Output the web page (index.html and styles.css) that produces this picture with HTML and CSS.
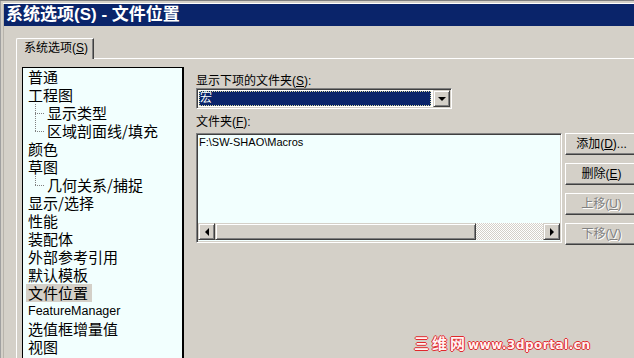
FILE: index.html
```html
<!DOCTYPE html>
<html lang="zh-CN">
<head>
<meta charset="utf-8">
<title>系统选项(S) - 文件位置</title>
<link rel="stylesheet" href="styles.css">
</head>
<body>
<div class="window">
  <div class="titlebar">系统选项(S) - 文件位置</div>
  <div class="dialog">
    <div class="tabs">
      <div class="tab">系统选项(<u>S</u>)</div>
    </div>
    <div class="panel">
      <div class="tree">
        <div class="item">普通</div>
        <div class="item">工程图</div>
        <div class="item child"><span class="conn"></span>显示类型</div>
        <div class="item child last"><span class="conn"></span>区域剖面线/填充</div>
        <div class="item">颜色</div>
        <div class="item">草图</div>
        <div class="item child last"><span class="conn"></span>几何关系/捕捉</div>
        <div class="item">显示/选择</div>
        <div class="item">性能</div>
        <div class="item">装配体</div>
        <div class="item">外部参考引用</div>
        <div class="item">默认模板</div>
        <div class="item selected"><span class="hl">文件位置</span></div>
        <div class="item latin">FeatureManager</div>
        <div class="item">选值框增量值</div>
        <div class="item">视图</div>
        <div class="item">备份/恢复</div>
      </div>
      <div class="right">
        <div class="label">显示下项的文件夹(<u>S</u>):</div>
        <div class="combo-row">
          <div class="combo">
            <div class="combo-sel">宏</div>
            <div class="drop"><span class="tri"></span></div>
          </div>
        </div>
        <div class="label label2">文件夹(<u>F</u>):</div>
        <div class="list-row">
          <div class="listbox">
            <div class="list-content">F:\SW-SHAO\Macros</div>
            <div class="hscroll">
              <div class="arrow"><span class="tri-left"></span></div>
              <div class="thumb"></div>
              <div class="track"></div>
              <div class="arrow"><span class="tri-right"></span></div>
            </div>
          </div>
          <div class="buttons">
            <div class="btn">添加(<u>D</u>)...</div>
            <div class="btn">删除(<u>E</u>)</div>
            <div class="btn disabled">上移(<u>U</u>)</div>
            <div class="btn disabled">下移(<u>V</u>)</div>
          </div>
        </div>
      </div>
    </div>
  </div>
  <div class="watermark"><span class="wm-cjk">三维网</span><span class="wm-lat">www.3dportal.cn</span></div>
</div>
</body>
</html>
```

FILE: styles.css
```css
html, body {
  margin: 0;
  padding: 0;
}

body {
  width: 634px;
  height: 358px;
  overflow: hidden;
  background: #d4d0c8;
  font-family: "Liberation Sans", "Noto Sans CJK SC", sans-serif;
  color: #000;
}

.window {
  position: relative;
  width: 634px;
  height: 358px;
  box-sizing: border-box;
  padding: 4px 0 0 4px;
  background: #d4d0c8;
  overflow: hidden;
  box-shadow: inset 0 1px #808080, inset 1px 0 #a0a0a0, inset 0 3px #d4d0c8, inset 3px 0 #d4d0c8, inset 0 4px #ffffff, inset 4px 0 #b8b4ac;
}

.titlebar {
  height: 22px;
  line-height: 22px;
  background: #0a246a;
  color: #fff;
  font-weight: bold;
  font-size: 17px;
  padding-left: 2px;
  white-space: nowrap;
}

.dialog {
  padding: 12px 0 0 12px;
}

.tabs {
  display: flex;
  height: 20px;
}

.tab {
  position: relative;
  z-index: 1;
  box-sizing: border-box;
  width: 78px;
  height: 21px;
  border-top: 1px solid #fff;
  border-left: 1px solid #fff;
  border-right: 1px solid #404040;
  border-top-left-radius: 2px;
  box-shadow: inset -1px 0 #808080;
  background: #d4d0c8;
  font-size: 12px;
  line-height: 18px;
  padding-left: 7px;
  white-space: nowrap;
}

.tab u, .label u, .btn u {
  text-decoration: underline;
}

.panel {
  display: flex;
  border-top: 1px solid #fff;
  border-left: 1px solid #fff;
  padding: 8px 0 0 5px;
  height: 300px;
}

.tree {
  flex-shrink: 0;
  box-sizing: border-box;
  width: 162px;
  height: 320px;
  border: 1px solid #000;
  border-right-width: 2px;
  background: #f2fffe;
  font-size: 15px;
  line-height: 18px;
  white-space: nowrap;
  overflow: hidden;
}

.item {
  height: 18px;
  padding-left: 5px;
  font-family: "Noto Sans CJK SC", sans-serif;
}

.item.child {
  padding-left: 12px;
  display: flex;
}

.conn {
  display: inline-block;
  flex-shrink: 0;
  width: 10px;
  height: 18px;
  margin-right: 2px;
  background-image:
    repeating-linear-gradient(to bottom, #808080 0 1px, transparent 1px 2px),
    repeating-linear-gradient(to right, #808080 0 1px, transparent 1px 2px);
  background-repeat: no-repeat;
  background-size: 1px 18px, 10px 1px;
  background-position: 0 0, 0 9px;
}

.item.child.last .conn {
  background-size: 1px 10px, 10px 1px;
}

.item.selected {
  padding-left: 3px;
}

.hl {
  display: inline-block;
  height: 18px;
  line-height: 18px;
  padding: 0 4px 0 2px;
  background: #d4d0c8;
}

.item.latin {
  font-family: "Liberation Sans", sans-serif;
  font-size: 12.5px;
  color: #000;
}

.right {
  margin-left: 12px;
  padding-top: 7px;
  font-size: 12px;
  white-space: nowrap;
}

.label {
  height: 14px;
  line-height: 14px;
}

.label2 {
  margin-top: 6px;
  margin-bottom: 4px;
}

.combo {
  box-sizing: border-box;
  width: 256px;
  height: 21px;
  display: flex;
  border: 1px solid;
  border-color: #808080 #fff #fff #808080;
  box-shadow: inset 1px 1px #404040, inset -1px -1px #d4d0c8;
  padding: 1px;
  background: #fff;
}

.combo-sel {
  flex: 1;
  margin: 1px 2px 1px 1px;
  background: #0a246a;
  color: #fff;
  line-height: 14px;
  padding-left: 1px;
  outline: 1px dotted #d8d8a0;
  outline-offset: -1px;
}

.drop {
  box-sizing: border-box;
  width: 17px;
  height: 17px;
  background: #d4d0c8;
  border: 1px solid;
  border-color: #d4d0c8 #404040 #404040 #d4d0c8;
  box-shadow: inset 1px 1px #fff, inset -1px -1px #808080;
  display: flex;
  align-items: center;
  justify-content: center;
}

.tri {
  width: 0;
  height: 0;
  border-left: 4px solid transparent;
  border-right: 4px solid transparent;
  border-top: 4px solid #000;
  margin-top: 1px;
}

.list-row {
  display: flex;
  gap: 3px;
}

.listbox {
  box-sizing: border-box;
  width: 366px;
  height: 110px;
  display: flex;
  flex-direction: column;
  border: 1px solid;
  border-color: #808080 #fff #fff #808080;
  box-shadow: inset 1px 1px #404040, inset -1px -1px #d4d0c8;
  padding: 1px;
  background: #f2fffe;
}

.list-content {
  flex: 1;
  font-family: "Liberation Sans", sans-serif;
  font-size: 11px;
  line-height: 14px;
  padding-left: 1px;
}

.hscroll {
  display: flex;
  height: 17px;
  margin-bottom: 1px;
}

.arrow {
  box-sizing: border-box;
  width: 17px;
  height: 17px;
  background: #d4d0c8;
  border: 1px solid;
  border-color: #d4d0c8 #404040 #404040 #d4d0c8;
  box-shadow: inset 1px 1px #fff, inset -1px -1px #808080;
  display: flex;
  align-items: center;
  justify-content: center;
}

.tri-left {
  width: 0;
  height: 0;
  border-top: 4px solid transparent;
  border-bottom: 4px solid transparent;
  border-right: 4px solid #000;
}

.tri-right {
  width: 0;
  height: 0;
  border-top: 4px solid transparent;
  border-bottom: 4px solid transparent;
  border-left: 4px solid #000;
}

.thumb {
  box-sizing: border-box;
  width: 261px;
  height: 17px;
  background: #d4d0c8;
  border: 1px solid;
  border-color: #d4d0c8 #404040 #404040 #d4d0c8;
  box-shadow: inset 1px 1px #fff, inset -1px -1px #808080;
}

.track {
  flex: 1;
  height: 17px;
  background-color: #fff;
  background-image:
    linear-gradient(45deg, #d4d0c8 25%, transparent 25%, transparent 75%, #d4d0c8 75%),
    linear-gradient(45deg, #d4d0c8 25%, transparent 25%, transparent 75%, #d4d0c8 75%);
  background-size: 2px 2px;
  background-position: 0 0, 1px 1px;
}

.buttons {
  display: flex;
  flex-direction: column;
  gap: 8px;
}

.btn {
  box-sizing: border-box;
  width: 80px;
  height: 22px;
  border: 1px solid;
  border-color: #fff #404040 #404040 #fff;
  box-shadow: inset -1px -1px #808080, inset 1px 1px #d4d0c8;
  background: #d4d0c8;
  line-height: 20px;
  font-size: 12px;
  text-align: center;
  padding-right: 7px;
}

.btn.disabled {
  color: #808080;
  text-shadow: 1px 1px #fff;
}

.watermark {
  position: absolute;
  left: 414px;
  top: 335px;
  font-weight: bold;
  color: #fff4f4;
  text-shadow: 1px 0 #e0282c, -1px 0 #e0282c, 0 1px #e0282c, 0 -1px #e0282c;
  white-space: nowrap;
  line-height: 16px;
}

.wm-cjk {
  font-family: "Noto Sans CJK SC", sans-serif;
  font-size: 15px;
  letter-spacing: 3px;
}

.wm-lat {
  font-family: "DejaVu Sans", sans-serif;
  font-size: 12px;
  letter-spacing: 0.5px;
}
```
